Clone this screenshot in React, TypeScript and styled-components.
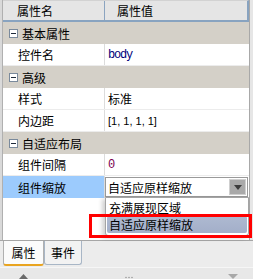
import React from "react";
import styled, { createGlobalStyle } from "styled-components";

const GlobalStyle = createGlobalStyle`
  html, body { margin: 0; padding: 0; }
  body {
    font-family: "Noto Sans CJK SC", "Liberation Sans", sans-serif;
    font-size: 12px;
    color: #000;
  }
`;

const Window = styled.div`
  position: relative;
  width: 253px;
  height: 279px;
  overflow: hidden;
  background: #ececec;
  display: flex;
  flex-direction: column;
`;

const Body = styled.div`
  display: flex;
  height: 240px;
`;

const LeftStrip = styled.div`
  width: 2px;
  background: #d9d9d9;
  border-right: 1px solid #b0b0b0;
`;

const RightStrip = styled.div`
  width: 3px;
  background: #e6e6e6;
  border-left: 1px solid #a8a8a8;
`;

const Grid = styled.div`
  width: 246px;
  display: flex;
  flex-direction: column;
  background: #fff;
`;

const Header = styled.div`
  display: grid;
  grid-template-columns: 102px 1fr;
  height: 22px;
  box-sizing: border-box;
  background: #e5e5e5;
  border-top: 1px solid #d2d2d2;
  border-bottom: 2px solid #88a3c0;
  border-right: 2px solid #88a3c0;
`;

const HeaderCell = styled.div<{ $first?: boolean }>`
  display: flex;
  align-items: center;
  padding-left: ${(p) => (p.$first ? "14px" : "12px")};
  border-right: ${(p) => (p.$first ? "1px solid #8ba4c0" : "none")};
  line-height: 1;
`;

const Row = styled.div`
  display: grid;
  grid-template-columns: 102px 1fr;
  height: 22px;
  box-sizing: border-box;
  border-bottom: 1px solid #ececec;
`;

const NameCell = styled.div<{ $selected?: boolean }>`
  display: flex;
  align-items: center;
  padding-left: 15px;
  border-right: 1px solid #dcdcdc;
  background: ${(p) => (p.$selected ? "#9ccbfd" : "transparent")};
`;

const ValueCell = styled.div<{ $color?: string; $mono?: boolean }>`
  position: relative;
  display: flex;
  align-items: center;
  padding-left: 3px;
  color: ${(p) => p.$color || "#000"};
  font-family: ${(p) =>
    p.$mono ? '"Liberation Mono", monospace' : 'inherit'};
  letter-spacing: ${(p) => (p.$mono ? "-1.2px" : "0")};
`;

const Bracket = styled.span`
  font-family: "Liberation Sans", sans-serif;
  font-size: 11px;
`;

const GroupRow = styled.div`
  display: flex;
  align-items: center;
  height: 22px;
  background: #d4d0c8;
  padding-left: 6px;
  gap: 4px;
`;

const MinusBox = styled.span`
  position: relative;
  width: 9px;
  height: 9px;
  box-sizing: border-box;
  border: 1px solid #7a8a9c;
  background: #fff;
  &::after {
    content: "";
    position: absolute;
    left: 1px;
    right: 1px;
    top: 3px;
    height: 1px;
    background: #1e2a3a;
  }
`;

const Filler = styled.div`
  flex: 1;
  background: #fff;
`;

const ComboCell = styled.div`
  position: relative;
  padding: 1px 1px 1px 0;
`;

const Combo = styled.div`
  position: relative;
  display: flex;
  align-items: center;
  height: 20px;
  box-sizing: border-box;
  border: 1px solid #9a9a9a;
  background: #fff;
  padding-left: 2px;
`;

const ComboButton = styled.div`
  position: absolute;
  right: 1px;
  top: 1px;
  width: 17px;
  height: 16px;
  box-sizing: border-box;
  background: #a9a9a9;
  border: 1px solid #cfcfcf;
  display: flex;
  align-items: center;
  justify-content: center;
`;

const ListBox = styled.div`
  position: absolute;
  left: 0;
  top: 21px;
  width: 144px;
  box-sizing: border-box;
  background: #fff;
  border: 1px solid #a4a4a4;
  border-radius: 0 0 3px 3px;
  padding: 1px 1px 2px;
  z-index: 2;
  box-shadow: -3px 2px 4px rgba(0, 0, 0, 0.18);
`;

const ListItem = styled.div<{ $active?: boolean }>`
  height: 17px;
  display: flex;
  align-items: center;
  padding-left: 2px;
  border-radius: 2px;
  background: ${(p) =>
    p.$active ? "linear-gradient(#aeb9d1, #a3afc9)" : "transparent"};
`;

const Highlight = styled.div`
  position: absolute;
  left: 89px;
  top: 214px;
  width: 163px;
  height: 24px;
  box-sizing: border-box;
  border: 3px solid #ff0000;
  z-index: 3;
  pointer-events: none;
`;

const TabBar = styled.div`
  display: flex;
  height: 27px;
  box-sizing: border-box;
  border-top: 1px solid #a6a6a6;
  padding-left: 3px;
  background: #ececec;
`;

const Tab = styled.div<{ $active?: boolean }>`
  display: flex;
  align-items: center;
  justify-content: center;
  box-sizing: border-box;
  width: ${(p) => (p.$active ? "41px" : "38px")};
  height: ${(p) => (p.$active ? "25px" : "24px")};
  padding-bottom: 1px;
  background: ${(p) => (p.$active ? "#fbfbfb" : "#f2f2f2")};
  border: 1px solid ${(p) => (p.$active ? "#b0b0b0" : "#a8b6c6")};
  border-top: none;
  border-bottom: ${(p) => (p.$active ? "2px solid #e9a420" : "1px solid #a8b6c6")};
  border-radius: 0 0 3px 3px;
  font-size: 12px;
`;

const BottomBar = styled.div`
  position: relative;
  flex: 1;
  background: #e8e8e8;
  border-top: 1px solid #f6f6f6;
`;

const Grip = styled.svg`
  position: absolute;
  bottom: 0;
`;

type Item =
  | { kind: "group"; label: string }
  | { kind: "prop"; name: string; value?: string; color?: string; mono?: boolean; bracket?: boolean };

const rows: Item[] = [
  { kind: "group", label: "基本属性" },
  { kind: "prop", name: "控件名", value: "body", color: "#00007a", mono: true },
  { kind: "group", label: "高级" },
  { kind: "prop", name: "样式", value: "标准" },
  { kind: "prop", name: "内边距", value: "[1, 1, 1, 1]", bracket: true },
  { kind: "group", label: "自适应布局" },
  { kind: "prop", name: "组件间隔", value: "0", color: "#7a0050", mono: true },
];

const App = () => {
  return (
    <Window>
      <GlobalStyle />
      <Body>
        <LeftStrip />
        <Grid>
          <Header>
            <HeaderCell $first>属性名</HeaderCell>
            <HeaderCell>属性值</HeaderCell>
          </Header>
          {rows.map((r, i) =>
            r.kind === "group" ? (
              <GroupRow key={i}>
                <MinusBox />
                {r.label}
              </GroupRow>
            ) : (
              <Row key={i}>
                <NameCell>{r.name}</NameCell>
                <ValueCell $color={r.color} $mono={r.mono}>
                  {r.bracket ? <Bracket>{r.value}</Bracket> : r.value}
                </ValueCell>
              </Row>
            )
          )}
          <Row>
            <NameCell $selected>组件缩放</NameCell>
            <ComboCell>
              <Combo>
                自适应原样缩放
                <ComboButton>
                  <svg width="8" height="5" viewBox="0 0 8 5">
                    <path d="M0 0h8L4 5z" fill="#3c3c3c" />
                  </svg>
                </ComboButton>
              </Combo>
              <ListBox>
                <ListItem>充满展现区域</ListItem>
                <ListItem $active>自适应原样缩放</ListItem>
              </ListBox>
            </ComboCell>
          </Row>
          <Filler />
        </Grid>
        <RightStrip />
      </Body>
      <TabBar>
        <Tab $active>属性</Tab>
        <Tab>事件</Tab>
      </TabBar>
      <BottomBar>
        <Grip width="9" height="5" viewBox="0 0 9 5" style={{ left: 19 }}>
          <path d="M4.5 0L9 5H0z" fill="#6a6a6a" />
        </Grip>
        <Grip width="8" height="3" viewBox="0 0 8 3" style={{ left: 125 }}>
          <circle cx="1" cy="1.5" r="0.8" fill="#9a9a9a" />
          <circle cx="4" cy="1.5" r="0.8" fill="#9a9a9a" />
          <circle cx="7" cy="1.5" r="0.8" fill="#9a9a9a" />
        </Grip>
        <Grip width="10" height="5" viewBox="0 0 10 5" style={{ left: 228 }}>
          <path d="M0 0h10L5 5z" fill="#a8a8a8" />
        </Grip>
      </BottomBar>
      <Highlight />
    </Window>
  );
};

export default App;
